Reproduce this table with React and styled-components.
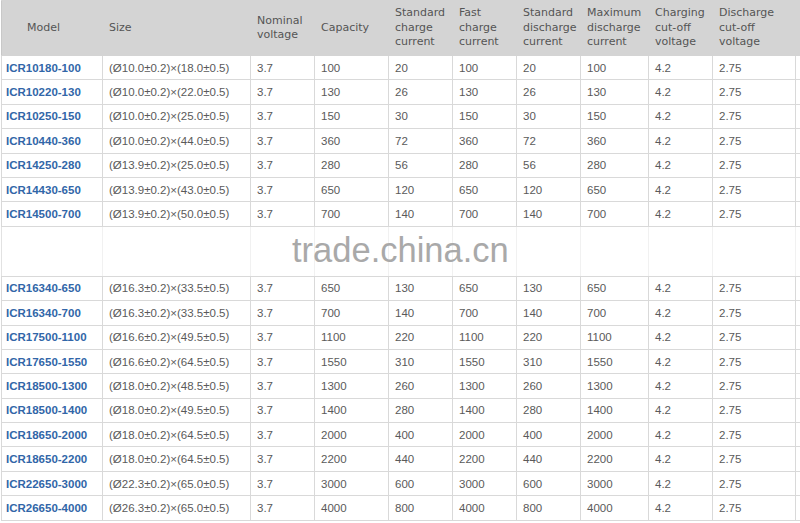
import React from "react";
import styled, { createGlobalStyle } from "styled-components";

const GlobalStyle = createGlobalStyle`
  html, body {
    margin: 0;
    padding: 0;
    background: #ffffff;
  }
`;

const columns = [
  { title: ["Model"], width: 101, first: true },
  { title: ["Size"], width: 148 },
  { title: ["Nominal", "voltage"], width: 64 },
  { title: ["Capacity"], width: 74 },
  { title: ["Standard", "charge", "current"], width: 64 },
  { title: ["Fast", "charge", "current"], width: 64 },
  { title: ["Standard", "discharge", "current"], width: 64 },
  { title: ["Maximum", "discharge", "current"], width: 68 },
  { title: ["Charging", "cut-off", "voltage"], width: 64 },
  { title: ["Discharge", "cut-off", "voltage"], width: 83 },
  { title: ["Weight"], width: 80 },
];

const row = (model, d, l, cap, std) => [
  model,
  `(Ø${d}±0.2)×(${l}±0.5)`,
  "3.7",
  cap,
  std,
  cap,
  std,
  cap,
  "4.2",
  "2.75",
  "",
];

const topRows = [
  row("ICR10180-100", "10.0", "18.0", "100", "20"),
  row("ICR10220-130", "10.0", "22.0", "130", "26"),
  row("ICR10250-150", "10.0", "25.0", "150", "30"),
  row("ICR10440-360", "10.0", "44.0", "360", "72"),
  row("ICR14250-280", "13.9", "25.0", "280", "56"),
  row("ICR14430-650", "13.9", "43.0", "650", "120"),
  row("ICR14500-700", "13.9", "50.0", "700", "140"),
];

const bottomRows = [
  row("ICR16340-650", "16.3", "33.5", "650", "130"),
  row("ICR16340-700", "16.3", "33.5", "700", "140"),
  row("ICR17500-1100", "16.6", "49.5", "1100", "220"),
  row("ICR17650-1550", "16.6", "64.5", "1550", "310"),
  row("ICR18500-1300", "18.0", "48.5", "1300", "260"),
  row("ICR18500-1400", "18.0", "49.5", "1400", "280"),
  row("ICR18650-2000", "18.0", "64.5", "2000", "400"),
  row("ICR18650-2200", "18.0", "64.5", "2200", "440"),
  row("ICR22650-3000", "22.3", "65.0", "3000", "600"),
  row("ICR26650-4000", "26.3", "65.0", "4000", "800"),
];

export default function App() {
  const renderRow = (cells, i) => (
    <Row key={cells[0] + i}>
      {cells.map((c, j) =>
        j === 0 ? (
          <ModelCell key={j}>{c}</ModelCell>
        ) : (
          <Cell key={j}>{c}</Cell>
        )
      )}
    </Row>
  );

  return (
    <>
      <GlobalStyle />
      <Page>
        <Table>
          <colgroup>
            {columns.map((c, i) => (
              <col key={i} style={{ width: c.width }} />
            ))}
          </colgroup>
          <thead>
            <HeadRow>
              {columns.map((c, i) => (
                <HeadCell key={i} $first={c.first}>
                  {c.title.map((t, k) => (
                    <div key={k}>{t}</div>
                  ))}
                </HeadCell>
              ))}
            </HeadRow>
          </thead>
          <tbody>
            {topRows.map(renderRow)}
            <GapRow>
              {columns.map((c, i) => (
                <GapCell key={i} />
              ))}
            </GapRow>
            {bottomRows.map(renderRow)}
          </tbody>
        </Table>
        <Watermark>trade.china.cn</Watermark>
      </Page>
    </>
  );
}

const Page = styled.div`
  position: relative;
  width: 800px;
  height: 523px;
  overflow: hidden;
  padding-left: 1px;
  box-sizing: border-box;
  background: #ffffff;
`;

const Table = styled.table`
  border-collapse: collapse;
  table-layout: fixed;
  width: 874px;
  font-family: "Liberation Sans", Arial, sans-serif;
`;

const HeadRow = styled.tr`
  height: 55px;
  background: #d4d4d4;
`;

const HeadCell = styled.th`
  padding: 0 0 0 ${(p) => (p.$first ? "25px" : "6px")};
  text-align: left;
  vertical-align: middle;
  font-family: "DejaVu Sans", Verdana, sans-serif;
  font-weight: normal;
  font-size: 11px;
  line-height: 14.5px;
  color: #555555;
  border: 1px solid #d4d4d4;
  border-left-color: ${(p) => (p.$first ? "#c8c8c8" : "#d4d4d4")};
  white-space: nowrap;
  overflow: hidden;
`;

const Row = styled.tr`
  height: 24.4px;
`;

const Cell = styled.td`
  padding: 0 0 0 6px;
  font-size: 11.5px;
  color: #5a5a5a;
  border: 1px solid #d9d9d9;
  white-space: nowrap;
  overflow: hidden;
`;

const ModelCell = styled(Cell)`
  padding-left: 4px;
  font-weight: bold;
  color: #3166a8;
`;

const GapRow = styled.tr`
  height: 50px;
`;

const GapCell = styled.td`
  border-top: 1px solid #d9d9d9;
  border-bottom: 1px solid #d9d9d9;
  border-left: 1px solid #f1f1f1;
  border-right: 1px solid #f1f1f1;
  &:first-child {
    border-left-color: #e2e2e2;
  }
`;

const Watermark = styled.div`
  position: absolute;
  left: 292px;
  top: 233px;
  font-family: "Liberation Sans", Arial, sans-serif;
  font-size: 34.5px;
  line-height: 34px;
  color: #a9a9a9;
  pointer-events: none;
`;
